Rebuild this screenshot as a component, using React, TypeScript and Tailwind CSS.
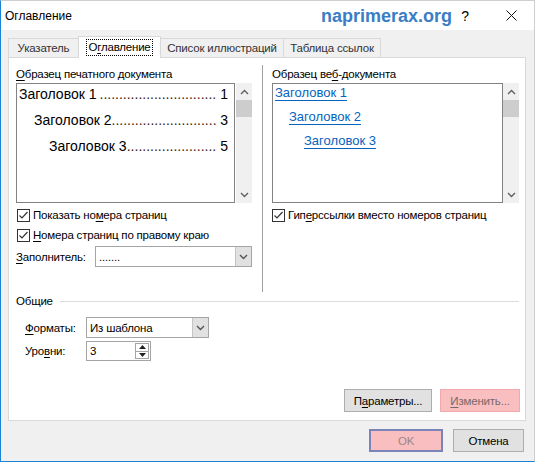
import React from 'react'

// Access-key letter, underlined as in Windows dialogs
function K({ children }: { children: React.ReactNode }) {
  return <span className="underline decoration-1 underline-offset-[2px]">{children}</span>
}

function Chevron({ up = false, color = '#606060' }: { up?: boolean; color?: string }) {
  return (
    <svg width="9" height="6" viewBox="0 0 9 6">
      <path d={up ? 'M1 5 L4.5 1.5 L8 5' : 'M1 1 L4.5 4.5 L8 1'} stroke={color} strokeWidth="1.4" fill="none" />
    </svg>
  )
}

function ScrollBar() {
  return (
    <div className="w-[16px] bg-[#f0f0f0] flex flex-col">
      <div className="h-[17px] flex items-center justify-center">
        <Chevron up />
      </div>
      <div className="h-[17px] bg-[#cdcdcd]" />
      <div className="flex-1" />
      <div className="h-[17px] flex items-center justify-center">
        <Chevron />
      </div>
    </div>
  )
}

function CheckRow({ children }: { children: React.ReactNode }) {
  return (
    <div className="flex items-center h-4 gap-[3px]">
      <span className="w-[13px] h-[13px] border border-[#333] bg-white flex items-center justify-center shrink-0">
        <svg width="11" height="11" viewBox="0 0 11 11">
          <path d="M1.5 5.5 L4 8 L9.5 2" stroke="#333" strokeWidth="1.2" fill="none" />
        </svg>
      </span>
      <span className="whitespace-nowrap">{children}</span>
    </div>
  )
}

function Combo({ value, width }: { value: string; width: string }) {
  return (
    <div className={`${width} h-[21px] border border-[#a5a5a5] bg-white flex items-stretch`}>
      <div className="flex-1 pl-[3px] flex items-center">{value}</div>
      <div className="w-[16px] bg-[#e1e1e1] border-l border-[#c4c4c4] flex items-center justify-center">
        <Chevron color="#555" />
      </div>
    </div>
  )
}

function TocLine({ title, page, indent, dots }: { title: string; page: string; indent: string; dots: number }) {
  return (
    <div className={`flex h-[20px] items-center pr-[6px] ${indent}`}>
      <span className="whitespace-nowrap">{title}</span>
      <span className="flex-1 min-w-0 overflow-hidden whitespace-nowrap text-right text-[#3a1a12]">
        {'.'.repeat(dots)}
      </span>
      <span className="pl-[4px]">{page}</span>
    </div>
  )
}

function LinkLine({ title, indent }: { title: string; indent: string }) {
  return (
    <div className={`h-[18px] flex items-center ${indent}`}>
      <span className="text-[#0563c1] underline decoration-1 underline-offset-[3px] text-[13px] tracking-normal">{title}</span>
    </div>
  )
}

function Btn({ children, className }: { children: React.ReactNode; className: string }) {
  return (
    <div className={`h-[23px] flex items-center justify-center border ${className}`}>{children}</div>
  )
}

export default function App() {
  return (
    <div className="w-[535px] h-[463px] bg-white">
      <div className="w-[535px] h-[462px] flex flex-col bg-[#f0f0f0] border-l border-b border-[#1883d7] border-t border-t-[#cfcfcf] border-r border-r-[#cfcfcf] font-['Liberation_Sans',sans-serif] text-[11.5px] tracking-[-0.2px] text-black leading-4">
        {/* title bar */}
        <div className="h-[29px] bg-white flex items-center shrink-0">
          <span className="pl-[4px] text-[12px] tracking-normal">Оглавление</span>
          <div className="flex-1" />
          <span className="font-bold text-[18px] tracking-normal text-[#3a7dc6] mr-[-10px] relative">
            naprimerax.org
          </span>
          <div className="w-[46px] h-full flex items-center justify-center text-[14px]">?</div>
          <div className="w-[46px] h-full flex items-center justify-center">
            <svg width="11" height="11" viewBox="0 0 11 11">
              <path d="M0.5 0.5 L10.5 10.5 M10.5 0.5 L0.5 10.5" stroke="#111" strokeWidth="1" />
            </svg>
          </div>
        </div>

        {/* tabs */}
        <div className="mt-[6px] ml-[7px] h-[21px] flex items-end relative z-10 shrink-0 whitespace-nowrap">
          <div className="w-[71px] h-[19px] border border-b-0 border-[#d9d9d9] flex items-center justify-center text-[#333]">
            Указатель
          </div>
          <div className="-ml-px w-[83px] h-[22px] mb-[-1px] bg-white border border-b-0 border-[#d9d9d9] flex items-center justify-center">
            <span className="border border-dotted border-black px-[1px] leading-[15px]">
              О<K>г</K>лавление
            </span>
          </div>
          <div className="-ml-px w-[124px] h-[19px] border border-b-0 border-[#d9d9d9] flex items-center justify-center text-[#333]">
            Список иллюстраций
          </div>
          <div className="-ml-px w-[98px] h-[19px] border border-b-0 border-[#d9d9d9] flex items-center justify-center text-[#333]">
            Таблица ссылок
          </div>
        </div>

        {/* tab page */}
        <div className="ml-[7px] w-[518px] h-[364px] bg-white border border-[#d9d9d9] flex flex-col shrink-0">
          <div className="h-[235px] flex pl-[7px] shrink-0">
            {/* printed preview */}
            <div className="w-[236px] pt-[8px] flex flex-col">
              <div className="h-4 whitespace-nowrap">
                <K>О</K>бразец печатного документа
              </div>
              <div className="mt-[1px] h-[120px] flex">
                <div className="w-[219px] border border-[#828282] bg-white pl-[2px] text-[14px] tracking-normal flex flex-col gap-[6px]">
                  <TocLine title="Заголовок 1" page="1" indent="" dots={30} />
                  <TocLine title="Заголовок 2" page="3" indent="pl-[15px]" dots={27} />
                  <TocLine title="Заголовок 3" page="5" indent="pl-[30px]" dots={23} />
                </div>
                <div className="ml-[1px] flex">
                  <ScrollBar />
                </div>
              </div>
              <div className="mt-[4px] pl-[1px]">
                <CheckRow>
                  Показать но<K>м</K>ера страниц
                </CheckRow>
              </div>
              <div className="mt-[4px] pl-[1px]">
                <CheckRow>
                  <K>Н</K>омера страниц по правому краю
                </CheckRow>
              </div>
              <div className="mt-[3px] flex items-center">
                <span className="w-[79px]">
                  <K>З</K>аполнитель:
                </span>
                <Combo value="......." width="w-[157px]" />
              </div>
            </div>

            <div className="ml-[10px] mt-[7px] mb-[1px] w-px bg-[#a0a0a0]" />

            {/* web preview */}
            <div className="ml-[9px] w-[247px] pt-[8px] flex flex-col">
              <div className="h-4 whitespace-nowrap">
                Образец ве<K>б</K>-документа
              </div>
              <div className="mt-[1px] h-[120px] flex">
                <div className="w-[231px] border border-[#828282] bg-white pl-[2px] flex flex-col gap-[6px]">
                  <LinkLine title="Заголовок 1" indent="" />
                  <LinkLine title="Заголовок 2" indent="pl-[14px]" />
                  <LinkLine title="Заголовок 3" indent="pl-[29px]" />
                </div>
                <ScrollBar />
              </div>
              <div className="mt-[4px]">
                <CheckRow>
                  Гип<K>е</K>рссылки вместо номеров страниц
                </CheckRow>
              </div>
            </div>
          </div>

          {/* general group */}
          <div className="pl-[7px] pr-[6px] h-4 flex items-center shrink-0">
            <span>Общие</span>
            <div className="ml-[7px] flex-1 h-px bg-[#dcdcdc]" />
          </div>
          <div className="mt-[8px] pl-[16px] flex items-center">
            <span className="w-[61px]">
              <K>Ф</K>орматы:
            </span>
            <Combo value="Из шаблона" width="w-[123px]" />
          </div>
          <div className="mt-[3px] pl-[16px] flex items-center">
            <span className="w-[61px]">
              Уро<K>в</K>ни:
            </span>
            <div className="w-[65px] h-[20px] border border-[#a5a5a5] bg-white flex">
              <div className="flex-1 pl-[3px] flex items-center">3</div>
              <div className="w-[14px] my-[1px] mr-[1px] flex flex-col border border-[#a5a5a5]">
                <div className="flex-1 flex items-center justify-center border-b border-[#a5a5a5]">
                  <svg width="7" height="4" viewBox="0 0 7 4">
                    <path d="M0 4 L3.5 0 L7 4 Z" fill="#222" />
                  </svg>
                </div>
                <div className="flex-1 flex items-center justify-center">
                  <svg width="7" height="4" viewBox="0 0 7 4">
                    <path d="M0 0 L3.5 4 L7 0 Z" fill="#222" />
                  </svg>
                </div>
              </div>
            </div>
          </div>

          <div className="mt-auto mb-[8px] pr-[5px] flex justify-end gap-[8px]">
            <Btn className="w-[88px] bg-[#e1e1e1] border-[#adadad]">
              П<K>а</K>раметры...
            </Btn>
            <Btn className="w-[80px] bg-[#f9bfc0] border-[#f5a8a9] text-[#7a6868]">
              <K>И</K>зменить...
            </Btn>
          </div>
        </div>

        {/* dialog buttons */}
        <div className="mt-[8px] mr-[10px] flex justify-end gap-[10px] shrink-0">
          <Btn className="w-[74px] bg-[#f9bfc0] border-2 border-[#7a84b8] text-[#a08585]">OK</Btn>
          <Btn className="w-[71px] bg-[#e1e1e1] border-[#adadad]">Отмена</Btn>
        </div>
      </div>
    </div>
  )
}
